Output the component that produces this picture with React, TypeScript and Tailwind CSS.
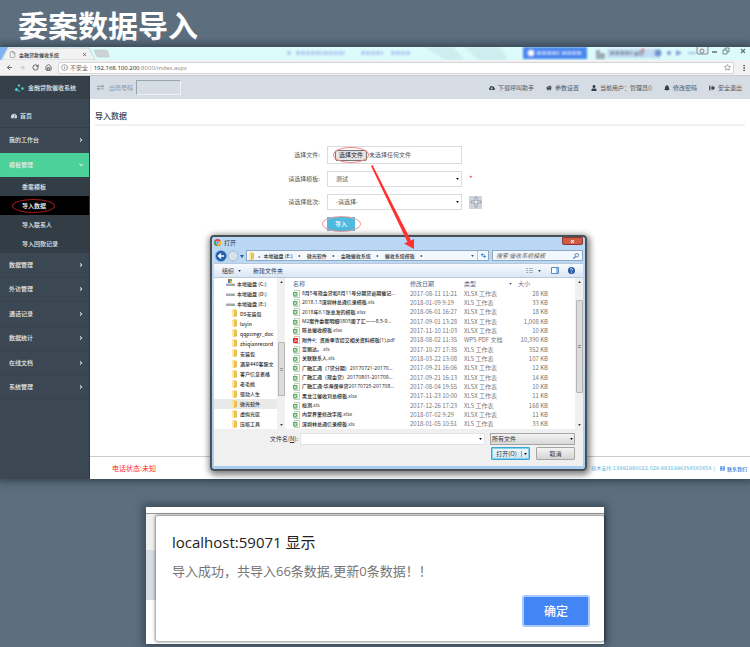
import {
  ArrowLeft,
  ArrowRight,
  EllipsisVertical,
  File,
  House,
  Info,
  RotateCw,
  Star,
  X,
} from "lucide-react";
import {
  FaAngleDown,
  FaAngleRight,
  FaBell,
  FaCloudDownloadAlt,
  FaExchangeAlt,
  FaHome,
  FaSignOutAlt,
  FaTachometerAlt,
  FaUser,
} from "react-icons/fa";

const subMenu = ["委案模板", "导入数据", "导入联系人", "导入回款记录"];

const lowerMenu = ["数据管理", "外访管理", "通话记录", "数据统计", "在线文档", "系统管理"];

const headerLinks = [
  { icon: FaCloudDownloadAlt, text: "下载呼叫助手" },
  { icon: FaHome, text: "参数设置" },
  { icon: FaUser, text: "当前用户：管理员()" },
  { icon: FaBell, text: "修改密码" },
  { icon: FaSignOutAlt, text: "安全退出" },
];

const crumbs = ["本地磁盘 (E:)", "微光软件", "金融催收系统", "催收系统模板"];

const drives = ["本地磁盘 (C:)", "本地磁盘 (D:)", "本地磁盘 (E:)"];

const folders = [
  "DS安装包",
  "luyin",
  "qqpcmgr_doc",
  "zhiqianrecord",
  "安装包",
  "酒泉440客服文",
  "客户信息表格",
  "老毛桃",
  "驱动人生",
  "微光软件",
  "虚拟光区",
  "压缩工具",
];

const files = [
  ["8月5号现金贷和8月11号分期贷逾期催记...", "2017-08-11 11:21", "XLSX 工作表", "28 KB"],
  ["2018.1.5深圳林总通信录模板.xls", "2018-01-09 9:19", "XLS 工作表", "33 KB"],
  ["2018年6.1张总发的模板.xlsx", "2018-06-01 16:27", "XLSX 工作表", "18 KB"],
  ["M2案件委案明细0805周了汇——8.5-9...", "2017-09-01 13:28", "XLSX 工作表", "1,008 KB"],
  ["陈总催收模板.xlsx", "2017-11-10 11:03", "XLSX 工作表", "10 KB"],
  ["附件4：资质审查提交相关资料模板(1).pdf", "2018-08-02 11:35", "WPS PDF 文档", "10,390 KB"],
  ["富丽达。.xls", "2017-10-27 17:35", "XLS 工作表", "352 KB"],
  ["关联联系人.xls", "2018-03-22 13:08", "XLS 工作表", "107 KB"],
  ["广融汇通（7贷分期）20170721-20170...", "2017-09-21 16:06", "XLSX 工作表", "12 KB"],
  ["广融汇通（现金贷）20170801-201709...", "2017-09-21 16:13", "XLSX 工作表", "14 KB"],
  ["广融汇通-华海保单贷20170725-201708...", "2017-08-04 19:55", "XLSX 工作表", "10 KB"],
  ["黑龙江催收刘总模板.xlsx", "2017-11-23 10:00", "XLSX 工作表", "11 KB"],
  ["检测.xls", "2017-12-26 17:23", "XLS 工作表", "168 KB"],
  ["内蒙界童修改字段.xlsx", "2018-07-02 9:29", "XLSX 工作表", "11 KB"],
  ["深圳林总通信录模板.xls", "2018-01-05 10:51", "XLS 工作表", "33 KB"],
];

const Caret = ({ className = "" }: { className?: string }) => (
  <svg viewBox="0 0 4 3" className={`h-[2px] w-[3px] shrink-0 ${className}`} fill="currentColor">
    <path d="M0 0h4L2 3z" />
  </svg>
);

const FolderIcon = () => (
  <svg viewBox="0 0 7 8" className="h-2 w-[7px] shrink-0">
    <path d="M1 1l3-1 2 1v6l-3 1-2-1z" fill="#f3d06a" />
    <path d="M3 2l3-1v6l-3 1z" fill="#e8c150" />
    <path d="M1 1l2 1v6l-2-1z" fill="#fbe9a6" />
  </svg>
);

const DriveIcon = ({ system }: { system?: boolean }) => (
  <svg viewBox="0 0 9 8" className="h-2 w-[9px] shrink-0">
    {system && (
      <g>
        <path d="M2 0h2v2H2z" fill="#e2553d" />
        <path d="M4 0h2v2H4z" fill="#5cb85c" />
        <path d="M2 2h2v2H2z" fill="#2f86d6" />
        <path d="M4 2h2v2H4z" fill="#f0c040" />
      </g>
    )}
    <path d="M1 4h7l1 1v2H0V5z" fill="#a8acb0" />
    <path d="M1 4h7l1 1H0z" fill="#d6d9dc" />
    <path d="M6 6h2" stroke="#5fb35f" strokeWidth="0.7" />
  </svg>
);

const SheetIcon = ({ pdf }: { pdf?: boolean }) =>
  pdf ? (
    <svg viewBox="0 0 7 8" className="h-2 w-[7px]">
      <path d="M1.500.5h5v7h-5z" fill="#fff" stroke="#d88" strokeWidth="0.6" />
      <path d="M0 2h5v5H0z" fill="#dc2b2b" />
      <path d="M1 6c1-1 1.500-2 1.500-3 0 1 1 2 2 2-1 0-2 0-3.500 1z" stroke="#fff" strokeWidth="0.5" fill="none" />
    </svg>
  ) : (
    <svg viewBox="0 0 7 8" className="h-2 w-[7px]">
      <path d="M1.5 0.5h5v7h-5z" fill="#fff" stroke="#8cb58c" strokeWidth="0.6" />
      <path d="M0 2h4.5v4.5H0z" fill="#5fae64" />
      <path d="M1 3l2.4 2.6M3.4 3L1 5.6" stroke="#fff" strokeWidth="0.7" />
    </svg>
  );

const BrowserTabs = () => {
  return (
    <div className="relative flex h-[13px] overflow-hidden bg-[#dcfbfb]">
      <svg viewBox="0 0 112 13" className="absolute top-0 left-0 h-[13px] w-28" aria-hidden="true">
        <path d="M0 0h8L1 13H0z" fill="#7fb2f3" />
        <path d="M2 13L8 1h81l6 12z" fill="#f2f2f2" stroke="#b5bfc2" strokeWidth="0.6" />
        <path d="M94 3h12q1 0 1.500 1l2 6h-11q-1.500 0-2-1z" fill="#cdd4d5" stroke="#bac3c4" strokeWidth="0.500" />
      </svg>
      <div className="relative flex w-[90px] items-center pt-px pr-[3px] pl-[9px] text-[#333]">
        <File className="mr-[3px] size-[7px] text-[#777]" />
        <span className="text-[5px] font-medium whitespace-nowrap">金融贷款催收系统</span>
        <X className="ml-auto size-[5px]" strokeWidth={3} />
      </div>
      {/* desktop showing through the glass strip */}
      <svg
        viewBox="0 0 470 13"
        className="absolute top-0 right-0 h-[13px] w-[470px]"
        aria-hidden="true"
      >
        <defs>
          <filter id="glass">
            <feGaussianBlur stdDeviation="1.200" />
          </filter>
        </defs>
        <g filter="url(#glass)">
          <path d="M145 0h28l12 13h-20zM185 0h35l8 13h-30z" fill="#cdeeee" />
          <path
            d="M7 6h5M16 6h27M44 6h21M81 6h22M111 6h20"
            stroke="#b6cdf3"
            strokeWidth="4"
            strokeDasharray="4 1"
          />
          <path d="M243 0h64v12h-64z" fill="#4a86ee" />
          <circle cx="251" cy="6" r="3" fill="#fff" />
          <path d="M257 6h22M282 6h20" stroke="#b5cff9" strokeWidth="3" strokeDasharray="4 1" />
          <path d="M316 3h4v3h5v6h-9z" fill="#9aabb3" />
          <path d="M327 2h53v9h-53z" fill="#c3dcf2" />
          <path d="M330 6h22M354 7h10" stroke="#8b9caf" strokeWidth="4" strokeDasharray="4 1" />
          <circle cx="361" cy="6" r="3" fill="#a1b2c6" />
          <circle cx="363" cy="3" r="1.500" fill="#e04848" />
          <circle cx="378" cy="6" r="3.500" fill="#6d94cf" />
          <circle cx="389" cy="6" r="2" fill="#7294c6" />
          <path d="M396 3l6 3-6 3z" fill="#7da0d6" />
          <path d="M408 6h8" stroke="#a9c3e6" strokeWidth="2" />
        </g>
        <g fill="none" stroke="#63727b" strokeWidth="0.800">
          <rect x="417" y="-1" width="11" height="8" rx="1" fill="#e4eff0" />
          <circle cx="422" cy="4" r="2" />
          <path d="M432 5h5" strokeWidth="1.500" />
          <path d="M443 3h4v4h-4zM445 3V1h4v4h-2" />
          <path d="M461 2l4 4M465 2l-4 4" strokeWidth="1.200" />
        </g>
      </svg>
    </div>
  );
};

const AddressBar = () => {
  return (
    <div className="flex h-4 items-center gap-[6px] border-b border-[#c8ccd0] bg-[#f1f1f1] pr-[2px] pl-[6px] text-[#555]">
      <button type="button" aria-label="后退">
        <ArrowLeft className="size-[7px]" strokeWidth={3} />
      </button>
      <button type="button" aria-label="前进" className="text-[#c4c4c4]">
        <ArrowRight className="size-[7px]" strokeWidth={3} />
      </button>
      <button type="button" aria-label="刷新">
        <RotateCw className="size-[7px]" strokeWidth={3} />
      </button>
      <button type="button" aria-label="主页">
        <House className="size-[7px]" strokeWidth={3} />
      </button>
      <div className="flex h-3 flex-1 items-center rounded-[2px] border border-[#d5d5d5] bg-white px-[2px] text-[6px] text-[#666]">
        <Info className="mr-[2px] size-[7px]" strokeWidth={2} />
        <span>不安全</span>
        <span className="mx-[2px] text-[#bbb]">|</span>
        <span className="font-['Open_Sans'] text-[#222]">
          192.168.100.200<span className="text-[#888]">:8000/index.aspx</span>
        </span>
        <Star className="ml-auto size-[7px]" strokeWidth={2} />
      </div>
      <EllipsisVertical className="size-2" strokeWidth={3} />
    </div>
  );
};

const Sidebar = () => {
  return (
    <nav className="w-[90px] shrink-0 border-r border-[#2f3941] bg-[#3b4752] text-[6px] font-medium text-[#e8ecef]">
      <div className="flex h-[23px] items-center bg-[#35404a] pl-[15px]">
        <svg viewBox="0 0 9 8" className="mr-1 h-2 w-[9px]">
          <circle cx="4" cy="1.500" r="1.200" fill="#3fd0b0" />
          <circle cx="1.500" cy="5.500" r="1.500" fill="#43d6e8" />
          <circle cx="7.500" cy="4.500" r="1.300" fill="#4bd7a0" />
          <circle cx="4" cy="7" r="0.800" fill="#43d6e8" />
        </svg>
        金融贷款催收系统
      </div>
      <div className="mt-[5px] grid h-[73px] auto-rows-fr">
        <a href="#home" className="flex items-center gap-[3px] border-b border-[#35404a] pl-[11px]">
          <FaTachometerAlt className="size-[6px]" />
          首页
        </a>
        <a href="#desk" className="flex items-center justify-between pr-[5px] pl-[9px]">
          我的工作台
          <FaAngleRight className="size-[6px]" />
        </a>
        <a href="#template" className="flex items-center justify-between bg-[#4bd199] pr-[5px] pl-[9px]">
          模板管理
          <FaAngleDown className="size-[6px]" />
        </a>
      </div>
      <ul className="bg-[#323d46]">
        {subMenu.map((item) => (
          <li key={item}>
            <a
              href="#import"
              className={`relative flex h-[19px] items-center pl-[22px] ${item === "导入数据" ? "bg-black text-white" : ""}`}
            >
              {item}
              {item === "导入数据" && (
                <span className="absolute left-3 h-[14px] w-[43px] rounded-[50%] border border-[#a51c1c]" />
              )}
            </a>
          </li>
        ))}
      </ul>
      <ul className="grid h-[147px] auto-rows-fr">
        {lowerMenu.map((item) => (
          <li key={item} className="grid border-b border-[#37434d]">
            <a href="#menu" className="flex items-center justify-between pr-[5px] pl-[9px]">
              {item}
              <FaAngleRight className="size-[6px]" />
            </a>
          </li>
        ))}
      </ul>
    </nav>
  );
};

const Header = () => {
  return (
    <header className="flex h-[23px] items-center bg-[#d6dce4] pr-2 pl-[7px] text-[6px] text-[#4b5966]">
      <FaExchangeAlt className="mr-[5px] size-[7px] text-[#8a97a5]" />
      <label htmlFor="dial" className="mr-[3px] text-[#8a97a5]">
        出局号码
      </label>
      <input
        id="dial"
        className="h-[15px] w-[45px] border border-[#eef0f3] border-t-[#9ba3ab] border-l-[#9ba3ab] bg-[#d6dce4]"
      />
      <div className="ml-auto flex gap-[12px]">
        {headerLinks.map(({ icon: Icon, text }) => (
          <a key={text} href="#top" className="flex items-center gap-[3px] whitespace-nowrap">
            <Icon className="size-[6px] text-[#33414e]" />
            {text}
          </a>
        ))}
      </div>
    </header>
  );
};

const ImportForm = () => {
  return (
    <form className="mt-[20px] ml-[190px] grid w-[210px] grid-cols-[40px_135px_1fr] items-center gap-x-[7px] gap-y-[7px] text-[6px] text-[#555]">
      <label htmlFor="file" className="text-right">
        选择文件:
      </label>
      <div className="flex h-[18px] items-center border border-[#dcdcdc] pl-[7px]">
        <input id="file" type="file" className="sr-only" />
        <label
          htmlFor="file"
          className="relative flex h-[11px] w-8 items-center justify-center rounded-[2px] border border-[#777] bg-[#e4e4e4] text-[#222]"
        >
          选择文件
          <span className="absolute h-4 w-9 rounded-[50%] border border-[#e88]" />
        </label>
        <span className="ml-[2px]">未选择任何文件</span>
      </div>
      <span />

      <label htmlFor="template" className="text-right">
        请选择模板:
      </label>
      <div className="relative flex items-center">
        <select id="template" className="h-4 w-full appearance-none border border-[#dcdcdc] pl-2 text-[6px]">
          <option>测试</option>
        </select>
        <Caret className="absolute right-[3px] text-black" />
      </div>
      <span className="text-[8px] leading-none text-red-500">*</span>

      <label htmlFor="batch" className="text-right">
        请选择批次:
      </label>
      <div className="relative flex items-center">
        <select id="batch" className="h-4 w-full appearance-none border border-[#dcdcdc] pl-2 text-[6px]">
          <option>-请选择-</option>
        </select>
        <Caret className="absolute right-[3px] text-black" />
      </div>
      <button type="button" aria-label="新增批次" className="flex size-[13px] items-center justify-center bg-[#d0d4dc]">
        <svg viewBox="0 0 12 12" className="size-3">
          <path d="M5 1h2v4h4v2H7v4H5V7H1V5h4z" fill="#e9ecf2" stroke="#858ea0" strokeWidth="0.800" />
        </svg>
      </button>

      <span />
      <div className="relative flex w-[28px] items-center justify-center">
        <button type="button" className="h-[14px] w-full bg-[#4fb9de] text-[6px] font-medium text-white">
          导入
        </button>
        <span className="absolute h-4 w-[39px] rounded-[50%] border border-[#f0a0a0]" />
      </div>
    </form>
  );
};

const OpenDialog = () => {
  return (
    <section
      aria-label="打开"
      className="absolute top-[188px] left-[210px] flex h-[236px] w-[377px] flex-col rounded-[4px] border-2 border-[#4a5058] bg-linear-to-b from-[#b9d7f5] via-[#c3dcf4] to-[#a9cdee] px-[2px] pb-[3px] text-[6px] whitespace-nowrap text-[#333] shadow-[1px_2px_6px_2px_rgba(0,0,0,0.5)]"
    >
      <div className="flex h-[11px] items-center">
        <svg viewBox="0 0 8 8" className="mr-[3px] size-[7px]">
          <circle cx="4" cy="4" r="4" fill="#e84335" />
          <path d="M4 4L.5 2A4 4 0 0 0 4 8z" fill="#34a853" />
          <path d="M4 4v4a4 4 0 0 0 3.500-6z" fill="#fbbc05" />
          <circle cx="4" cy="4" r="1.900" fill="#fff" />
          <circle cx="4" cy="4" r="1.400" fill="#4285f4" />
        </svg>
        打开
        <button
          type="button"
          aria-label="关闭"
          className="ml-auto flex h-2 w-[21px] items-center justify-center self-start rounded-b-[2px] border border-[#8c3a30] bg-[#cf5a45] text-white"
        >
          <X className="size-[5px]" strokeWidth={5} />
        </button>
      </div>

      <div className="flex h-[15px] items-center">
        <svg viewBox="0 0 30 12" className="h-3 w-[30px] shrink-0">
          <circle cx="7" cy="6" r="5.500" fill="#1e5fae" stroke="#8ba7c5" strokeWidth="0.600" />
          <path d="M10 6H5M7 3.500L4.500 6 7 8.500" stroke="#fff" strokeWidth="1.500" fill="none" />
          <circle cx="19" cy="6" r="5" fill="#d5e2ef" stroke="#8d9fb3" strokeWidth="0.600" />
          <path d="M26 5h4l-2 3z" fill="#2b5a8c" />
        </svg>
        <div className="ml-[2px] flex h-[11px] flex-1 items-center border border-[#8fa8c2] bg-[#f2f8fd] pl-px text-[5px] font-medium">
          <FolderIcon />
          <span className="mx-[3px] text-[5px]">«</span>
          {crumbs.map((crumb) => (
            <span key={crumb} className="flex items-center gap-[5px] pr-[6px]">
              {crumb}
              <Caret className="-rotate-90 text-black" />
            </span>
          ))}
          <Caret className="mr-[3px] ml-auto text-[#24507f]" />
          <span className="flex h-full w-[11px] items-center justify-center border-l border-[#b5c7da]">
            <svg viewBox="0 0 8 8" className="size-[7px]">
              <path d="M1 3l2-2v1.500h2v1H3V5zM7 5L5 7V5.500H3v-1h2V3z" fill="#2f7fd0" />
            </svg>
          </span>
        </div>
        <div className="ml-[3px] flex h-[11px] w-[91px] items-center border border-[#8fa8c2] bg-[#f2f8fd] pr-[3px]">
          <input
            aria-label="搜索"
            placeholder="搜索 催收系统模板"
            className="w-0 flex-1 pl-[3px] text-[6px] italic outline-none placeholder:text-[#666]"
          />
          <svg viewBox="0 0 8 8" className="size-[6px]" fill="none" stroke="#2b6cb0">
            <circle cx="5" cy="3" r="2.300" />
            <path d="M3.300 4.700L.5 7.500" strokeWidth="1.400" />
          </svg>
        </div>
      </div>

      <div className="flex h-[15px] items-center border-y border-[#b9c9da] bg-linear-to-b from-[#f7fafd] to-[#dbe7f4] pr-2 pl-[8px] text-[#1e395b]">
        组织
        <Caret className="ml-1" />
        <span className="ml-[12px]">新建文件夹</span>
        <svg viewBox="0 0 8 6" className="ml-auto h-[6px] w-2" fill="#9eb2c8">
          <path d="M0 0h2v1H0zM3 0h4v1H3zM0 2h2v1H0zM3 2h4v1H3zM0 4h2v1H0zM3 4h4v1H3z" />
        </svg>
        <Caret className="ml-[4px]" />
        <svg viewBox="0 0 8 7" className="ml-[10px] h-[7px] w-2">
          <path d="M.5.5h7v6h-7z" fill="#fff" stroke="#5a8abf" />
          <path d="M5 1h2v5H5z" fill="#8fc0e8" />
        </svg>
        <svg viewBox="0 0 8 8" className="ml-[9px] size-[7px]">
          <circle cx="4" cy="4" r="4" fill="#2557a7" />
          <path d="M2.800 3a1.200 1.200 0 1 1 1.800 1.100Q4 4.400 4 5M4 5.800v.9" stroke="#fff" fill="none" strokeWidth="0.900" />
        </svg>
      </div>

      <div className="flex h-[151px] overflow-hidden bg-white">
        <ul className="flex h-[151px] w-[63px] shrink-0 flex-col text-[5px] font-medium">
          {drives.map((drive, i) => (
            <li key={drive} className="flex flex-1 items-center gap-[2px] pl-[12px]">
              <DriveIcon system={i === 0} />
              {drive}
            </li>
          ))}
          {folders.map((folder) => (
            <li
              key={folder}
              className={`flex flex-1 items-center gap-[2px] pl-[17px] ${folder === "微光软件" ? "bg-[#e9e9e9]" : ""}`}
            >
              <FolderIcon />
              {folder}
            </li>
          ))}
        </ul>
        <div className="flex w-[8px] shrink-0 flex-col items-center bg-[#f0f0f0] py-[3px]">
          <Caret className="rotate-180" />
          <span className="mt-[59px] flex h-[54px] w-[7px] items-center justify-center rounded-[1px] border border-[#b5b5b5] bg-[#dcdcdc]">
            <span className="h-[3px] w-[3px] border-y border-[#999]" />
          </span>
          <span className="flex-1" />
          <Caret />
        </div>
        <div className="min-w-0 flex-1 pl-[8px]">
          <table className="h-[151px] w-full table-fixed border-collapse text-left leading-none">
            <colgroup>
              <col className="w-[9px]" />
              <col className="w-[108px]" />
              <col className="w-[54px]" />
              <col className="w-[52px]" />
              <col className="w-[32px]" />
              <col />
            </colgroup>
            <thead className="text-[#4c6a94]">
              <tr className="h-[11px]">
                <th colSpan={2} className="font-normal">
                  名称
                </th>
                <th className="font-normal">修改日期</th>
                <th className="font-normal">
                  <span className="flex items-center justify-between pr-1">
                    类型
                    <Caret />
                  </span>
                </th>
                <th className="pl-[2px] font-normal">大小</th>
                <th></th>
              </tr>
            </thead>
            <tbody>
              {files.map(([name, date, kind, size]) => (
                <tr key={name}>
                  <td>
                    <SheetIcon pdf={name.endsWith(".pdf")} />
                  </td>
                  <td className="font-['Open_Sans','Noto_Sans_CJK_SC',sans-serif] text-[5px] font-medium text-[#222]">
                    {name}
                  </td>
                  <td className="text-[#777]">{date}</td>
                  <td className="text-[#777]">{kind}</td>
                  <td className="text-right text-[#777]">{size}</td>
                  <td></td>
                </tr>
              ))}
            </tbody>
          </table>
        </div>
        <div className="flex w-[8px] shrink-0 flex-col items-center bg-[#f0f0f0] py-[3px]">
          <Caret className="rotate-180" />
          <span className="mt-[17px] flex h-[93px] w-[7px] items-center justify-center rounded-[1px] border border-[#b5b5b5] bg-[#dcdcdc]">
            <span className="h-[3px] w-[3px] border-y border-[#888]" />
          </span>
          <span className="flex-1" />
          <Caret />
        </div>
      </div>

      <div className="flex flex-1 flex-col items-end gap-[2px] bg-[#f0f0f0] pt-[4px] pr-[8px]">
        <div className="flex items-center">
          <label htmlFor="filename" className="mr-[2px]">
            文件名(<u>N</u>):
          </label>
          <div className="relative mr-[5px] flex items-center">
            <input id="filename" className="h-3 w-[185px] border border-[#e0e3e8] bg-white" />
            <Caret className="absolute right-[3px] text-black" />
          </div>
          <div className="relative flex items-center">
            <select
              aria-label="文件类型"
              className="h-3 w-[85px] appearance-none border border-[#a5a5a5] bg-linear-to-b from-[#f3f3f3] to-[#d8d8d8] pl-[1px] text-[6px]"
            >
              <option>所有文件</option>
            </select>
            <Caret className="absolute right-[2px] text-black" />
          </div>
        </div>
        <div className="flex gap-[6px]">
          <button
            type="button"
            className="flex h-[13px] w-[39px] items-center rounded-[1px] border border-[#3ea5d2] bg-linear-to-b from-[#f3f9fd] to-[#cfe3ef] text-[6px] shadow-[inset_0_0_0_1px_#7fd3f0]"
          >
            <span className="flex-1 border-r border-[#7aa7bd]">打开(O)</span>
            <Caret className="mx-[2px] text-black" />
          </button>
          <button
            type="button"
            className="h-[13px] w-[39px] rounded-[1px] border border-[#a5a5a5] bg-linear-to-b from-[#f3f3f3] to-[#d5d5d5] text-[6px]"
          >
            取消
          </button>
        </div>
      </div>
    </section>
  );
};

const BrowserWindow = () => {
  return (
    <main className="relative bg-white shadow-[0_0_8px_3px_rgba(30,42,54,0.6)]">
      <BrowserTabs />
      <AddressBar />
      <div className="flex">
        <Sidebar />
        <div className="flex h-[403px] min-w-0 flex-1 flex-col">
          <Header />
          <h2 className="mx-[5px] flex h-[27px] items-end border-b-2 border-[#f0f1f4] pb-[4px] text-[8px] font-medium text-[#37444f]">
            导入数据
          </h2>
          <ImportForm />
          <footer className="mt-auto flex h-[23px] items-center border-t border-[#c9ccd4] pr-[3px] pl-[22px]">
            <span className="text-[7px] text-[#ff2a2a]">电话状态:未知</span>
            <span className="ml-auto font-['DejaVu_Sans','Noto_Sans_CJK_SC',sans-serif] text-[5px] text-[#5bb5dc]">
              技术支持:13991980022,029-8831996356565656 |
            </span>
            <a href="#contact" className="ml-[5px] flex items-center gap-[2px] text-[5px] font-medium text-[#3b7fe0]">
              <svg viewBox="0 0 5 5" className="size-[5px]" fill="none" stroke="currentColor">
                <path d="M0 1h5M0 2.500h5M0 4h5M1 0v5M4 0v5" strokeWidth="0.700" />
              </svg>
              联系我们
            </a>
          </footer>
        </div>
      </div>
      <OpenDialog />
      <svg viewBox="0 0 50 90" className="absolute top-[117px] left-[368px] h-[90px] w-[50px]">
        <path d="M3 2l1.500-1L43 76.500l3-1.500v10L36 79.500l3.500-1.500z" fill="#ff3030" />
      </svg>
    </main>
  );
};

const ImportResult = () => {
  return (
    <section className="mx-auto mt-[28px] h-[137px] w-[458px] bg-[linear-gradient(#efefef_0_43px,#d6dce4_43px_93px,#fff_93px)] shadow-[0_0_8px_3px_rgba(30,42,54,0.55)]">
      <div className="h-[7px] border-b border-[#999] bg-white"></div>
      <div
        role="alertdialog"
        aria-label="localhost:59071 显示"
        className="mt-[2px] ml-[10px] flex h-[125px] flex-col rounded-[2px] bg-white px-4 pt-4 shadow-[0_0_3px_1px_rgba(0,0,0,0.45)]"
      >
        <h3 className="font-['Open_Sans','Noto_Sans_CJK_SC',sans-serif] text-[15px] leading-5 text-[#222]">
          localhost:59071 显示
        </h3>
        <p className="mt-[9px] font-['Open_Sans','Noto_Sans_CJK_SC',sans-serif] text-[13px] leading-5 text-[#757575]">
          导入成功，共导入66条数据,更新0条数据！！
        </p>
        <button
          type="button"
          className="mt-[14px] -mr-[2px] h-8 w-[68px] self-end rounded-[3px] border-2 border-[#a9c8fb] bg-[#4285f4] text-[12px] font-medium text-white"
        >
          确定
        </button>
      </div>
    </section>
  );
};

const App = () => {
  return (
    <div className="min-h-screen overflow-hidden bg-[#5d6f7f] pb-[3px] font-['Noto_Sans_CJK_SC',sans-serif] leading-none">
      <h1 className="flex h-[47px] items-center pl-[18px] text-[30px] font-bold text-white">
        委案数据导入
      </h1>
      <BrowserWindow />
      <ImportResult />
    </div>
  );
};

export default App;
